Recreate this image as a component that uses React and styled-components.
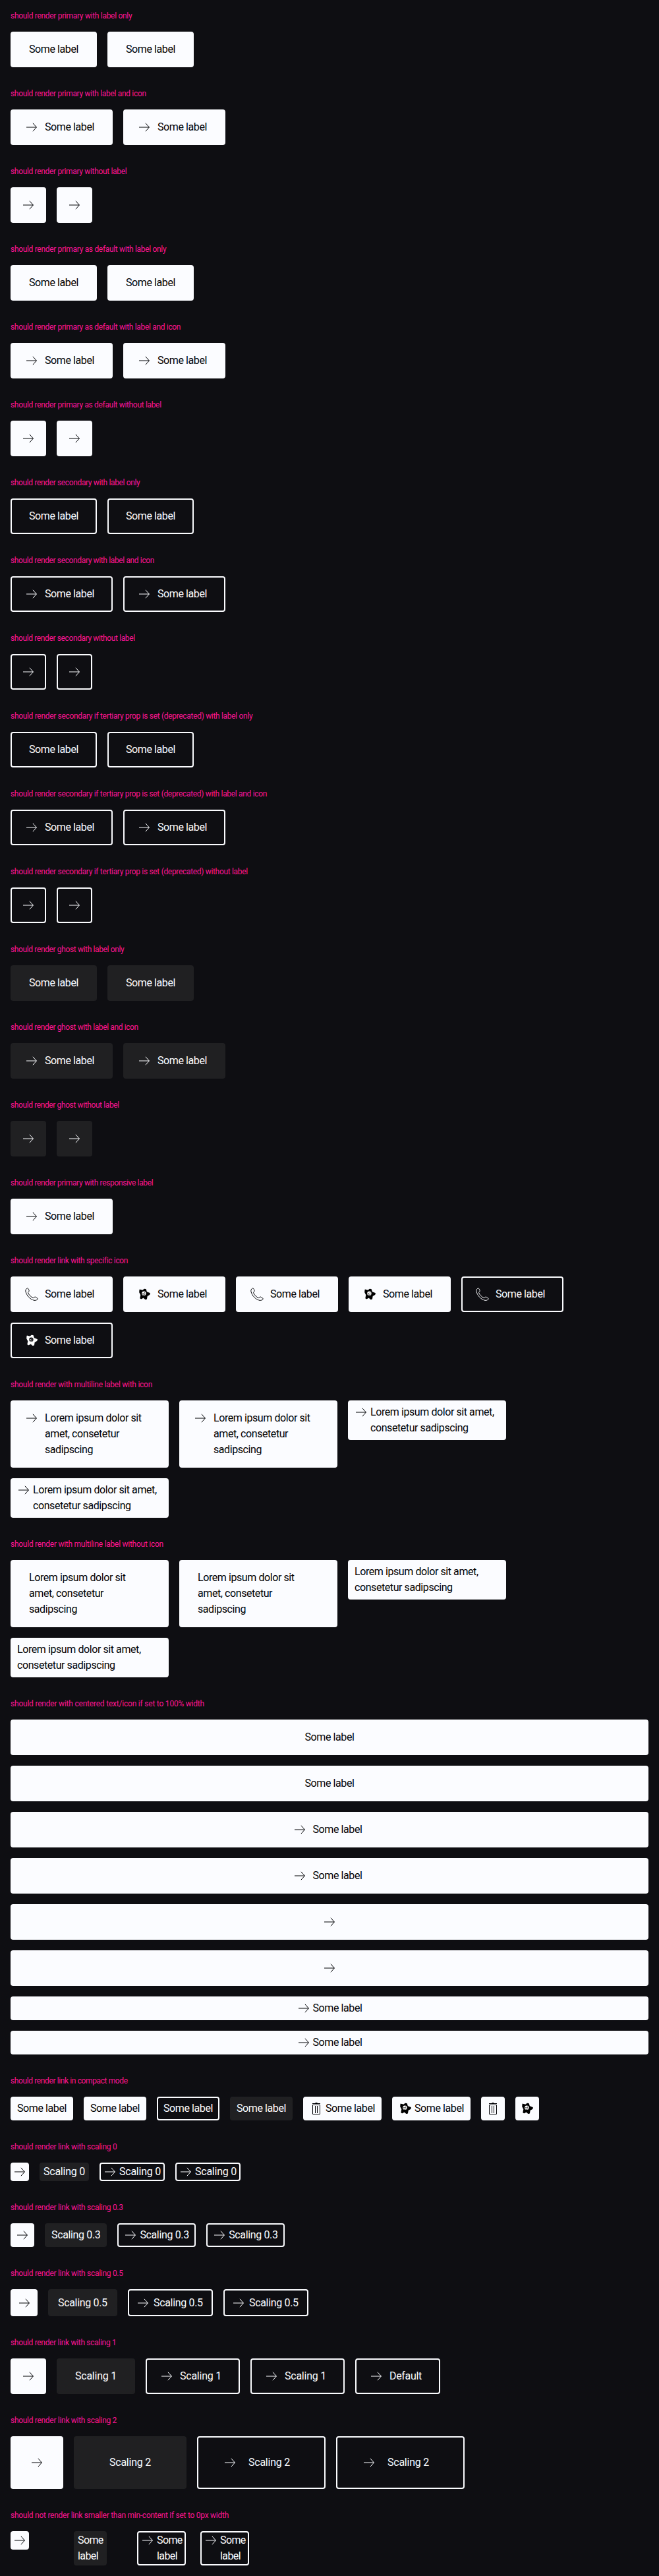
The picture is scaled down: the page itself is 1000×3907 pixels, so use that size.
import React from "react";
import styled, { createGlobalStyle, css } from "styled-components";

const color = {
  background: "#0e0e12",
  light: "#fbfcff",
  dark: "#010205",
  frosted: "#202022",
  caption: "#ff1493",
};

const GlobalStyle = createGlobalStyle`
  *, *::before, *::after { box-sizing: border-box; }
  body {
    margin: 0;
    background: ${color.background};
    font-family: Roboto, "Liberation Sans", sans-serif;
  }
`;

/* Spacing for each scaling step: block padding, label padding, icon padding and icon gap. */
const sizes = {
  "0": { block: 0, inline: 4, icon: 2, gap: 2 },
  compact: { block: 4, inline: 8, icon: 6, gap: 2 },
  "0.3": { block: 4, inline: 8, icon: 5.6, gap: 2.4, end: 8.4 },
  "0.5": { block: 6.5, inline: 13, icon: 9, gap: 4 },
  "1": { block: 13, inline: 26, icon: 18, gap: 8 },
  "2": { block: 26, inline: 52, icon: 36, gap: 16 },
};

const variants = {
  primary: css`
    background: ${color.light};
    border-color: ${color.light};
    color: ${color.dark};
  `,
  secondary: css`
    background: transparent;
    border-color: ${color.light};
    color: ${color.light};
  `,
  ghost: css`
    background: ${color.frosted};
    border-color: ${color.frosted};
    color: ${color.light};
  `,
};

const Page = styled.main`
  width: 100%;
`;

const Section = styled.section`
  display: flex;
  flex-direction: column;
  gap: 16px;
  padding: 16px;
`;

const Caption = styled.h2`
  margin: 0;
  font-size: 12px;
  line-height: 16px;
  font-weight: 400;
  letter-spacing: ${(p) => p.$tracking}px;
  color: ${color.caption};
  white-space: nowrap;
`;

const Row = styled.div`
  display: flex;
  flex-wrap: wrap;
  align-items: flex-start;
  gap: 16px;
`;

const Cell = styled.div`
  display: flex;
  width: 80px;
`;

const inlinePadding = ({ $size: s, $icon, $label }) => {
  if (!$label) return `${s.block}px`;
  return $icon ? `${s.end ?? s.inline}px ${s.block}px ${s.icon}px` : `${s.inline}px`;
};

const Root = styled.a`
  display: flex;
  align-items: flex-start;
  justify-content: ${(p) => (p.$width === "100%" ? "center" : "flex-start")};
  flex: none;
  gap: ${(p) => p.$size.gap}px;
  width: ${(p) => p.$width ?? "auto"};
  padding: ${(p) => p.$size.block}px ${inlinePadding};
  border: 2px solid;
  border-radius: 4px;
  text-decoration: none;
  ${(p) => variants[p.$variant]}
`;

const Label = styled.span`
  width: ${(p) => (p.$width ? `${p.$width}px` : "auto")};
  font-size: 16px;
  line-height: 24px;
  letter-spacing: ${(p) => p.$tracking}px;
  white-space: ${(p) => (p.$wrap ? "normal" : "nowrap")};
`;

const Icon = styled.svg.attrs({ viewBox: "0 0 24 24", "aria-hidden": true })`
  display: block;
  flex: none;
  width: 24px;
  height: 24px;
  fill: none;
  stroke: currentColor;
`;

const icons = {
  arrow: (
    <Icon>
      <path d="M4 12H19.4M13.9 5.8L19.4 12L13.9 18.2" />
    </Icon>
  ),
  phone: (
    <Icon>
      <path
        strokeLinejoin="round"
        d="M5.6 2.8C3.5 3.8 2.4 5.6 2.9 7.8C4.6 14.3 9.8 19.9 16 21.3C18.4 21.6 20.4 20.7 21.3 18.9C21 18 19 16.7 17.4 16C16.4 16 15.4 17.4 14.2 17.5C11 16 8 13 6.5 9.7C6.7 8.5 8.2 7.7 8.2 6.7C7.8 5.2 6.8 2.9 5.6 2.8Z"
      />
    </Icon>
  ),
  trash: (
    <Icon>
      <path d="M6 4.5H18M10.5 3.5H13.5M6.5 6.5H17.5V20.5H6.5ZM10.5 8V19M13.5 8V19" />
    </Icon>
  ),
};

const starFill = { primary: ["#000", "#fff"], secondary: ["#fff", "#0e0e12"] };

function StarIcon({ variant }) {
  const [body, face] = starFill[variant];
  return (
    <Icon>
      <path
        fill={body}
        stroke={body}
        strokeWidth="1.6"
        strokeLinejoin="round"
        d="M5.3 5.4L9.6 6.6L12 4.6L14 4.7L15.2 8.7L20.1 10.7L19.6 12.3L16 14.2L15.2 18.9L13.6 19.1L10.7 16.6L7.3 18.5L6.2 17.8L7.1 13L5 9Z"
      />
      <circle cx="11.4" cy="10.8" r="3.2" fill={face} stroke="none" />
      <path stroke={body} strokeWidth=".9" d="M9.3 10.6H10.9M12.5 9.2L12.3 10.8M9.6 12.6C10.8 13.5 12.2 13.2 13.2 12.1" />
    </Icon>
  );
}

const labels = {
  "Some label": { width: 75, tracking: -0.41 },
  "Scaling 0": { width: 63, tracking: -0.24 },
  "Scaling 0.3": { width: 74.4, tracking: -0.36 },
  "Scaling 0.5": { width: 75, tracking: -0.33 },
  "Scaling 1": { width: 63, tracking: -0.24 },
  "Scaling 2": { width: 63, tracking: -0.24 },
  Default: { width: 49, tracking: -0.31 },
};

function LinkPure({ variant = "primary", icon, label, size = "1", width, wrapAt, multiline }) {
  const metrics = labels[label] ?? { tracking: -0.42 };
  return (
    <Root $variant={variant} $size={sizes[size]} $icon={!!icon} $label={!!label} $width={width}>
      {icon === "star" ? <StarIcon variant={variant} /> : icons[icon]}
      {label && (
        <Label
          $width={wrapAt ?? metrics.width}
          $tracking={wrapAt ? -0.6 : metrics.tracking}
          $wrap={multiline || !!wrapAt}
        >
          {label}
        </Label>
      )}
    </Root>
  );
}

const some = "Some label";
const lorem = "Lorem ipsum dolor sit amet, consetetur sadipscing";
const pair = (props) => [props, props];
const scaling = (size, extra = []) => [
  { icon: "arrow", size },
  { variant: "ghost", label: `Scaling ${size}`, size },
  ...pair({ variant: "secondary", icon: "arrow", label: `Scaling ${size}`, size }),
  ...extra,
];
const multiline = (icon) => [
  ...pair({ icon, label: lorem, multiline: true, width: "240px" }),
  ...pair({ icon, label: lorem, multiline: true, width: "240px", size: "compact" }),
];

const sections = [
  ["should render primary with label only", -0.306, pair({ label: some })],
  ["should render primary with label and icon", -0.327, pair({ icon: "arrow", label: some })],
  ["should render primary without label", -0.333, pair({ icon: "arrow" })],
  ["should render primary as default with label only", -0.318, pair({ label: some })],
  ["should render primary as default with label and icon", -0.325, pair({ icon: "arrow", label: some })],
  ["should render primary as default without label", -0.33, pair({ icon: "arrow" })],
  ["should render secondary with label only", -0.362, pair({ variant: "secondary", label: some })],
  ["should render secondary with label and icon", -0.37, pair({ variant: "secondary", icon: "arrow", label: some })],
  ["should render secondary without label", -0.38, pair({ variant: "secondary", icon: "arrow" })],
  ["should render secondary if tertiary prop is set (deprecated) with label only", -0.317, pair({ variant: "secondary", label: some })],
  ["should render secondary if tertiary prop is set (deprecated) with label and icon", -0.324, pair({ variant: "secondary", icon: "arrow", label: some })],
  ["should render secondary if tertiary prop is set (deprecated) without label", -0.324, pair({ variant: "secondary", icon: "arrow" })],
  ["should render ghost with label only", -0.371, pair({ variant: "ghost", label: some })],
  ["should render ghost with label and icon", -0.385, pair({ variant: "ghost", icon: "arrow", label: some })],
  ["should render ghost without label", -0.39, pair({ variant: "ghost", icon: "arrow" })],
  ["should render primary with responsive label", -0.353, [{ icon: "arrow", label: some }]],
  [
    "should render link with specific icon",
    -0.335,
    [
      { icon: "phone", label: some },
      { icon: "star", label: some },
      { icon: "phone", label: some },
      { icon: "star", label: some },
      { variant: "secondary", icon: "phone", label: some },
      { variant: "secondary", icon: "star", label: some },
    ],
  ],
  ["should render with multiline label with icon", -0.267, multiline("arrow")],
  ["should render with multiline label without icon", -0.26, multiline()],
  [
    "should render with centered text/icon if set to 100% width",
    -0.212,
    [
      ...pair({ label: some, width: "100%" }),
      ...pair({ icon: "arrow", label: some, width: "100%" }),
      ...pair({ icon: "arrow", width: "100%" }),
      ...pair({ icon: "arrow", label: some, width: "100%", size: "compact" }),
    ],
  ],
  [
    "should render link in compact mode",
    -0.382,
    [
      ...pair({ label: some, size: "compact" }),
      { variant: "secondary", label: some, size: "compact" },
      { variant: "ghost", label: some, size: "compact" },
      { icon: "trash", label: some, size: "compact" },
      { icon: "star", label: some, size: "compact" },
      { icon: "trash", size: "compact" },
      { icon: "star", size: "compact" },
    ],
  ],
  ["should render link with scaling 0", -0.29, scaling("0")],
  ["should render link with scaling 0.3", -0.29, scaling("0.3")],
  ["should render link with scaling 0.5", -0.29, scaling("0.5")],
  ["should render link with scaling 1", -0.32, scaling("1", [{ variant: "secondary", icon: "arrow", label: "Default" }])],
  ["should render link with scaling 2", -0.3, scaling("2")],
];

const minContent = [
  { icon: "arrow", size: "0" },
  { variant: "ghost", label: some, size: "0", wrapAt: 38 },
  ...pair({ variant: "secondary", icon: "arrow", label: some, size: "0", wrapAt: 38 }),
];

export default function App() {
  return (
    <Page>
      <GlobalStyle />
      {sections.map(([title, tracking, links]) => (
        <Section key={title}>
          <Caption $tracking={tracking}>{title}</Caption>
          <Row>
            {links.map((props, i) => (
              <LinkPure key={i} {...props} />
            ))}
          </Row>
        </Section>
      ))}
      <Section>
        <Caption $tracking={-0.265}>should not render link smaller than min-content if set to 0px width</Caption>
        <Row>
          {minContent.map((props, i) => (
            <Cell key={i}>
              <LinkPure {...props} />
            </Cell>
          ))}
        </Row>
      </Section>
    </Page>
  );
}
